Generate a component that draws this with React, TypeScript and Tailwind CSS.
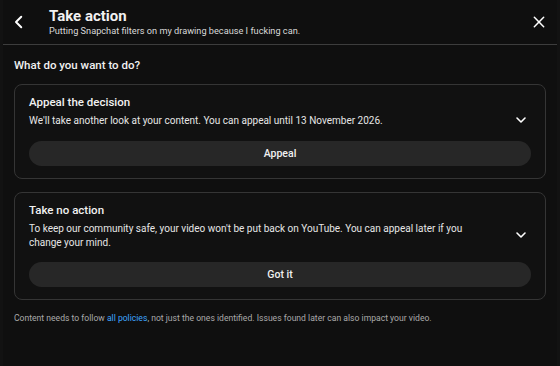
import React from 'react';

const Chevron = () => (
  <svg width="16" height="16" viewBox="0 0 24 24" fill="none" stroke="white" strokeWidth="2.4" strokeLinecap="round" strokeLinejoin="round">
    <path d="M6 9l6 6 6-6" />
  </svg>
);

interface OptionProps {
  title: string;
  text: string;
  button: string;
}

const Option: React.FC<OptionProps> = ({ title, text, button }) => (
  <div className="border border-[#353535] rounded-[8px] bg-[#111111] px-[14px] pt-[9px] pb-[12px]">
    <div className="flex items-center">
      <div className="flex-1 pr-[40px]">
        <div className="text-[11.5px] font-medium text-[#f1f1f1] leading-[16px]">{title}</div>
        <div className="text-[10px] text-[#e6e6e6] leading-[13.5px] mt-[4px]">{text}</div>
      </div>
      <div className="pt-[18px] pr-[2px]">
        <Chevron />
      </div>
    </div>
    <button className="mt-[13px] w-full h-[25px] rounded-full bg-[#272727] text-[10.5px] font-medium text-[#f1f1f1]">
      {button}
    </button>
  </div>
);

export default function App() {
  return (
    <div className="w-[560px] h-[366px] bg-[#121212] overflow-hidden" style={{ fontFamily: 'Roboto, "Liberation Sans", sans-serif' }}>
      <div className="mx-[3px] h-full bg-[#0f0f0f]">
        {/* header */}
        <div className="h-[45px] flex items-center border-b border-[#3d3d3d]">
          <div className="w-[32px] flex justify-center">
            <svg width="18" height="18" viewBox="0 0 24 24" fill="none" stroke="white" strokeWidth="2.6" strokeLinecap="round" strokeLinejoin="round">
              <path d="M15 5l-7 7 7 7" />
            </svg>
          </div>
          <div className="flex-1 ml-[14px] -mt-[1px]">
            <div className="text-[15px] font-bold text-[#f1f1f1] leading-[18px]">Take action</div>
            <div className="text-[9.2px] text-[#d9d9d9] leading-[11px]">Putting Snapchat filters on my drawing because I fucking can.</div>
          </div>
          <div className="w-[40px] flex justify-center pl-[3px]">
            <svg width="14" height="14" viewBox="0 0 24 24" fill="none" stroke="white" strokeWidth="2.6" strokeLinecap="round">
              <path d="M4 4l16 16M20 4L4 20" />
            </svg>
          </div>
        </div>
        {/* body */}
        <div className="px-[11px] pt-[12px]">
          <div className="text-[11.5px] font-medium text-[#f1f1f1] leading-[16px]">What do you want to do?</div>
          <div className="mt-[11px] flex flex-col gap-[13px]">
            <Option
              title="Appeal the decision"
              text="We'll take another look at your content. You can appeal until 13 November 2026."
              button="Appeal"
            />
            <Option
              title="Take no action"
              text="To keep our community safe, your video won't be put back on YouTube. You can appeal later if you change your mind."
              button="Got it"
            />
          </div>
          <div className="mt-[12px] text-[8.6px] text-[#aaaaaa] leading-[12px]">
            Content needs to follow <span className="text-[#3ea6ff]">all policies</span>, not just the ones identified. Issues found later can also impact your video.
          </div>
        </div>
      </div>
    </div>
  );
}
